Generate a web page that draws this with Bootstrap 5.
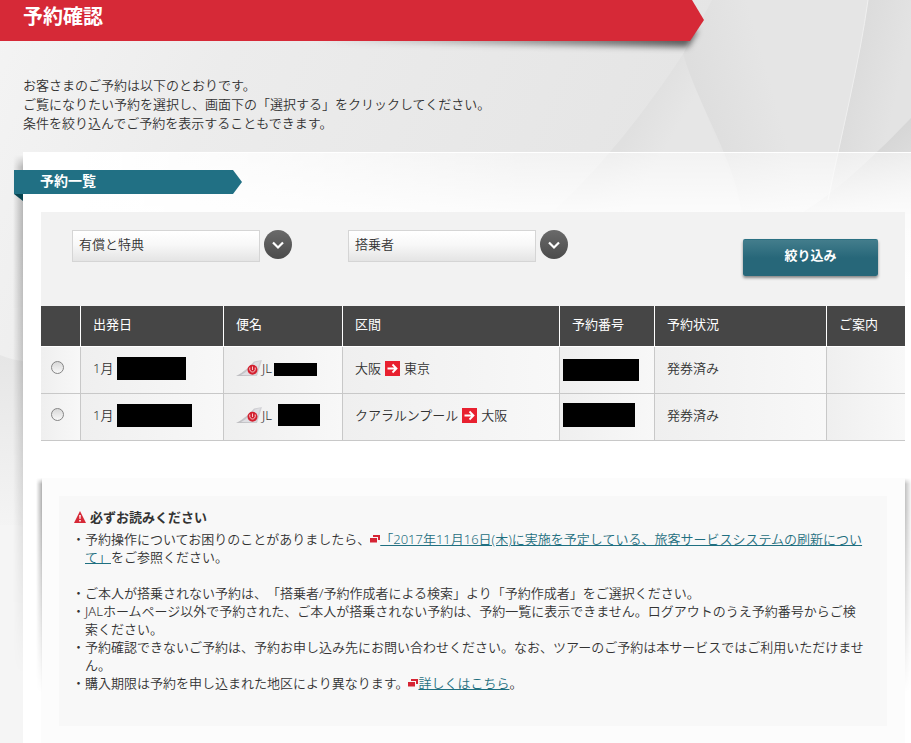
<!DOCTYPE html>
<html lang="ja">
<head>
<meta charset="utf-8">
<meta name="viewport" content="width=device-width, initial-scale=1">
<title>予約確認</title>
<link href="https://cdn.jsdelivr.net/npm/bootstrap@5.3.0/dist/css/bootstrap.min.css" rel="stylesheet">
<style>
  body { font-family: "Noto Sans", "Noto Sans CJK JP", sans-serif; font-size: 13px; line-height: 19px; font-weight: 350; color: #333; background: #f5f5f5; text-spacing-trim: space-all; }
  .page-wrap { min-height: 100vh; isolation: isolate; }
  .backdrop { left: 0; top: 0; width: 100%; height: 743px; z-index: -1; }

  .title-wrap { width: calc(100% - 207px); height: 41px; }
  .title-ribbon { height: 41px; padding: 4px 23px; background: #d62937; clip-path: polygon(0 0, calc(100% - 12px) 0, 100% 20px, calc(100% - 14px) 100%, 0 100%); }
  .title-ribbon h1 { font-size: 20px; line-height: 26px; font-weight: 700; }
  .title-shade { right: 0; top: 0; width: 400px; height: 60px; z-index: -1; }

  .lead-text { padding: 35px 23px 19px; }

  .sheet { margin-left: 23px; padding: 17px 6px 0 18px; border-top: 1px solid #fff;
    background: linear-gradient(180deg, rgba(255,255,255,.5) 0, rgba(255,255,255,.88) 60px, #fff 130px), linear-gradient(90deg, #fff 60px, rgba(255,255,255,0) 500px); }
  .sheet::before { content: ""; position: absolute; left: -10px; top: 2px; width: 10px; height: 520px;
    background: linear-gradient(270deg, rgba(0,0,0,.24), rgba(0,0,0,0));
    -webkit-mask-image: linear-gradient(#0000, #000 12px, #000 80px, #0000); mask-image: linear-gradient(#0000, #000 12px, #000 80px, #0000); }
  .section-ribbon { width: 228px; height: 24px; margin-left: -27px; padding-left: 26px; background: #217084; clip-path: polygon(0 0, calc(100% - 9px) 0, 100% 50%, calc(100% - 9px) 100%, 0 100%); font-size: 14px; line-height: 22px; font-weight: 700; }
  .ribbon-fold { width: 9px; height: 7px; margin-left: -27px; background: #084450; clip-path: polygon(0 0, 100% 0, 100% 100%); }

  .filter-bar { height: 94px; margin-top: 11px; padding: 18px 27px 0 31px; background: #f2f2f2; }
  .picker { width: 188px; height: 32px; padding: 0 6px 4px; border: 1px solid #d5d5d5; border-radius: 0; background: linear-gradient(#fff, #f8f8f8 45%, #e4e4e4); color: #333; font-size: 13px; line-height: 20px; font-weight: inherit; appearance: none; }
  .picker-group { gap: 4px; }
  .picker-set { gap: 56px; }
  .btn-filter { width: 135px; height: 37px; margin-top: 9px; padding: 0 0 4px; border: 0; border-top: 1px solid #2b7183; border-radius: 2px; color: #fff; font-size: 13px; font-weight: 700; background: linear-gradient(#437d8c, #276779 50%, #276779); box-shadow: 0 2px 3px rgba(0,0,0,.45); }
  .btn-filter:hover { color: #fff; background: #276779; }

  .bookings { table-layout: fixed; border-collapse: separate; border-spacing: 0; }
  .bookings th { height: 41px; padding: 0 12px 4px; background: #464646; color: #fff; font-weight: 400; border-right: 1px solid #fff; border-bottom: 1px solid #fff; }
  .bookings td { height: 47px; padding: 0 12px; background: linear-gradient(90deg, #efefef, #f8f8f8); border-right: 1px solid #c8c8c8; border-bottom: 1px solid #c8c8c8; }
  .bookings th:last-child, .bookings td:last-child { border-right: 0; }
  .bookings .pick { padding: 0 0 6px 10px; }
  .bookings .txt { padding-bottom: 4px; }
  .bookings .ref { padding: 0 3px; }
  .pick input { display: block; appearance: none; width: 13px; height: 13px; margin: 0; border: 1px solid #858585; border-radius: 50%; background: linear-gradient(#d8d8d8, #f8f8f8); }
  .pick input:checked { background: radial-gradient(#444 35%, #f4f4f4 40%); }
  .hidden-part { background: #000; flex: none; }
  .h-date { height: 23px; margin-left: 4px; }
  .w-date-a { width: 69px; } .w-date-b { width: 75px; }
  .h-slim { width: 43px; height: 13px; margin: 3px 0 0 2px; }
  .h-block { width: 42px; height: 22px; margin-left: 6px; }
  .ref-a { width: 76px; height: 22px; }
  .ref-b { width: 72px; height: 24px; margin-bottom: 5px; }

  .notes-outer { margin-top: 37px; padding: 18px 18px 17px; background: #fcfcfc; }
  .notes-outer::before, .notes-outer::after { content: ""; position: absolute; top: 0; width: 6px; height: 215px;
    -webkit-mask-image: linear-gradient(#0000, #000 6px, #000 30px, #0000); mask-image: linear-gradient(#0000, #000 6px, #000 30px, #0000); }
  .notes-outer::before { left: -5px; background: linear-gradient(270deg, rgba(0,0,0,.3), rgba(0,0,0,0)); }
  .notes-outer::after { right: -6px; background: linear-gradient(90deg, rgba(0,0,0,.24), rgba(0,0,0,.03)); }
  .notes-inner { padding: 12px 20px 34px 13px; background: #f8f8f8; line-height: 18px; }
  .notes-inner h3 { font-size: 13px; line-height: 18px; font-weight: 700; gap: 4px; padding-left: 2px; }
  .notes-inner ul { padding-left: 13px; list-style-type: "・"; }
  .notes-inner li.spaced { margin-bottom: 18px; }
  .notes-inner a { color: #1f6f80; }
  .notes-inner li svg { vertical-align: 1px; }
</style>
<script src="https://cdn.jsdelivr.net/npm/bootstrap@5.3.0/dist/js/bootstrap.bundle.min.js"></script>
</head>
<body>
<svg width="0" height="0" class="position-absolute" aria-hidden="true">
  <defs>
    <linearGradient id="tailGrad" x1="0" x2="1"><stop offset="0" stop-color="#bdbdc0"/><stop offset="1" stop-color="#d4d4d8"/></linearGradient>
    <linearGradient id="knobGrad" x1="0" x2="0" y1="0" y2="1"><stop offset="0" stop-color="#6a6a6a"/><stop offset="1" stop-color="#4b4b4b"/></linearGradient>
  </defs>
  <symbol id="knob" viewBox="0 0 28 29"><ellipse cx="14" cy="14.5" rx="14" ry="14.5" fill="url(#knobGrad)"/><path d="M9 12.5l5 5 5-5" fill="none" stroke="#fff" stroke-width="2.2"/></symbol>
  <symbol id="tail" viewBox="0 0 26 17"><path d="M0 16C8 12 14 6 18 1.500L26 0l-5 16z" fill="url(#tailGrad)"/><path d="M5 15C11 12 15 7 19 2.500l5-1.200L19.500 15z" fill="#dfdfe3"/><circle cx="16.500" cy="9.700" r="5" fill="#d3202f"/><path d="M13.800 7.500c-.6 3 1 4.500 2.700 4.500s3.300-1.500 2.700-4.500M16.500 6.500v3.500" fill="none" stroke="#f6c9cd" stroke-width="1"/></symbol>
  <symbol id="arrowBox" viewBox="0 0 15 15"><path fill="#e8202f" d="M0 0h15v15H0z"/><path d="M2.500 7.500h9M7.500 3.500l4 4-4 4" fill="none" stroke="#fff" stroke-width="1.800"/></symbol>
  <symbol id="newWin" viewBox="0 0 10 8"><path fill="#d62434" d="M3 0h7v5H8V2H3z"/><path fill="#d62434" d="M0 3h7v4.500H0z"/></symbol>
</svg>

<div class="page-wrap position-relative d-flex flex-column overflow-hidden">
  <svg class="backdrop position-absolute" viewBox="0 0 911 743" preserveAspectRatio="xMinYMin slice" aria-hidden="true">
    <defs>
      <linearGradient id="base" x1="0" x2=".7" y1="0" y2=".25"><stop offset="0" stop-color="#f4f4f4"/><stop offset=".35" stop-color="#ececec"/><stop offset="1" stop-color="#e5e5e5"/></linearGradient>
      <linearGradient id="facetA" gradientUnits="userSpaceOnUse" x1="700" y1="100" x2="770" y2="80"><stop offset="0" stop-color="#dedede"/><stop offset="1" stop-color="#e5e5e5"/></linearGradient>
      <linearGradient id="facetB" gradientUnits="userSpaceOnUse" x1="855" y1="70" x2="900" y2="80"><stop offset="0" stop-color="#dcdcdc"/><stop offset="1" stop-color="#e3e3e3"/></linearGradient>
      <linearGradient id="facetC" gradientUnits="userSpaceOnUse" x1="875" y1="148" x2="911" y2="190"><stop offset="0" stop-color="#d6d6d6"/><stop offset="1" stop-color="#e2e2e2"/></linearGradient>
      <linearGradient id="facetD" gradientUnits="userSpaceOnUse" x1="630" y1="130" x2="665" y2="150"><stop offset="0" stop-color="#e0e0e0"/><stop offset="1" stop-color="#e6e6e6"/></linearGradient>
      <linearGradient id="sideFade" x1="0" x2="0" y1="0" y2="1"><stop offset="0" stop-color="#e6e6e6"/><stop offset="1" stop-color="#f5f5f5"/></linearGradient>
    </defs>
    <path fill="url(#base)" d="M0 0h911v743H0z"/>
    <path fill="url(#facetD)" d="M683 54C650 105 600 170 550 214H745z"/>
    <path fill="url(#facetA)" d="M683 54C700 110 735 160 742 214H830L868 0H712z"/>
    <path fill="url(#facetB)" d="M868 0C860 60 840 140 826 214H911V0z"/>
    <path fill="url(#facetC)" d="M911 118C880 150 840 190 800 214H911z"/>
    <path d="M868 0C860 60 840 140 828 200" fill="none" stroke="#efefef" stroke-width="1"/>
    <path fill="url(#sideFade)" d="M0 355q12 5 23 6v180H0z"/>
    <path fill="#f5f5f5" d="M0 525h23v218H0z"/>
  </svg>

  <header class="title-wrap position-relative">
    <svg class="title-shade position-absolute" viewBox="0 0 400 60" aria-hidden="true">
      <defs>
        <linearGradient id="shadeFade" x1="0" x2="1"><stop offset="0" stop-color="#000" stop-opacity="0"/><stop offset="1" stop-color="#000" stop-opacity=".62"/></linearGradient>
        <filter id="soften" x="-5%" y="-20%" width="110%" height="160%"><feGaussianBlur stdDeviation="3"/></filter>
      </defs>
      <path d="M10 30h384l-10 17L10 42z" fill="url(#shadeFade)" filter="url(#soften)"/>
    </svg>
    <div class="title-ribbon text-white"><h1 class="m-0">予約確認</h1></div>
  </header>

  <p class="lead-text m-0">お客さまのご予約は以下のとおりです。<br>ご覧になりたい予約を選択し、画面下の「選択する」をクリックしてください。<br>条件を絞り込んでご予約を表示することもできます。</p>

  <main class="sheet position-relative flex-grow-1 d-flex flex-column">
    <h2 class="section-ribbon text-white mb-0">予約一覧</h2>
    <div class="ribbon-fold"></div>

    <form class="filter-bar d-flex justify-content-between align-items-start">
      <div class="picker-set d-flex">
        <div class="picker-group d-flex">
          <select class="picker" aria-label="有償と特典"><option>有償と特典</option></select>
          <svg width="28" height="29" aria-hidden="true"><use href="#knob"/></svg>
        </div>
        <div class="picker-group d-flex">
          <select class="picker" aria-label="搭乗者"><option>搭乗者</option></select>
          <svg width="28" height="29" aria-hidden="true"><use href="#knob"/></svg>
        </div>
      </div>
      <button type="button" class="btn btn-filter">絞り込み</button>
    </form>

    <table class="bookings w-100">
      <colgroup><col style="width:40px"><col style="width:143px"><col style="width:119px"><col style="width:217px"><col style="width:95px"><col style="width:172px"><col></colgroup>
      <thead>
        <tr><th></th><th>出発日</th><th>便名</th><th>区間</th><th>予約番号</th><th>予約状況</th><th>ご案内</th></tr>
      </thead>
      <tbody>
        <tr>
          <td class="pick"><input type="radio" name="booking" aria-label="大阪から東京"></td>
          <td class="txt"><div class="d-flex align-items-center">1月<span class="hidden-part h-date w-date-a"></span></div></td>
          <td class="txt"><div class="d-flex align-items-center"><svg width="26" height="17" aria-hidden="true"><use href="#tail"/></svg>JL<span class="hidden-part h-slim"></span></div></td>
          <td class="txt"><div class="d-flex align-items-center gap-1">大阪<svg width="15" height="15" aria-label="から"><use href="#arrowBox"/></svg>東京</div></td>
          <td class="ref"><div class="hidden-part ref-a"></div></td>
          <td class="txt">発券済み</td>
          <td></td>
        </tr>
        <tr>
          <td class="pick"><input type="radio" name="booking" aria-label="クアラルンプールから大阪"></td>
          <td class="txt"><div class="d-flex align-items-center">1月<span class="hidden-part h-date w-date-b"></span></div></td>
          <td class="txt"><div class="d-flex align-items-center"><svg width="26" height="17" aria-hidden="true"><use href="#tail"/></svg>JL<span class="hidden-part h-block"></span></div></td>
          <td class="txt"><div class="d-flex align-items-center gap-1">クアラルンプール<svg width="15" height="15" aria-label="から"><use href="#arrowBox"/></svg>大阪</div></td>
          <td class="ref"><div class="hidden-part ref-b"></div></td>
          <td class="txt">発券済み</td>
          <td></td>
        </tr>
      </tbody>
    </table>

    <section class="notes-outer position-relative flex-grow-1">
      <div class="notes-inner">
        <h3 class="d-flex align-items-center mb-1"><svg width="12" height="12" viewBox="0 0 12 12" aria-hidden="true"><path d="M6 0l6 12H0z" fill="#d62937"/><path d="M5.200 4h1.600l-.3 4h-1zM5.200 9h1.600v1.500H5.200z" fill="#fff"/></svg>必ずお読みください</h3>
        <ul class="m-0">
          <li class="spaced">予約操作についてお困りのことがありましたら、<svg width="10" height="8" aria-hidden="true"><use href="#newWin"/></svg><a href="#">「2017年11月16日(木)に実施を予定している、旅客サービスシステムの刷新について」</a>をご参照ください。</li>
          <li>ご本人が搭乗されない予約は、「搭乗者/予約作成者による検索」より「予約作成者」をご選択ください。</li>
          <li>JALホームページ以外で予約された、ご本人が搭乗されない予約は、予約一覧に表示できません。ログアウトのうえ予約番号からご検索ください。</li>
          <li>予約確認できないご予約は、予約お申し込み先にお問い合わせください。なお、ツアーのご予約は本サービスではご利用いただけません。</li>
          <li>購入期限は予約を申し込まれた地区により異なります。<svg width="10" height="8" aria-hidden="true"><use href="#newWin"/></svg><a href="#">詳しくはこちら</a>。</li>
        </ul>
      </div>
    </section>
  </main>
</div>
</body>
</html>
